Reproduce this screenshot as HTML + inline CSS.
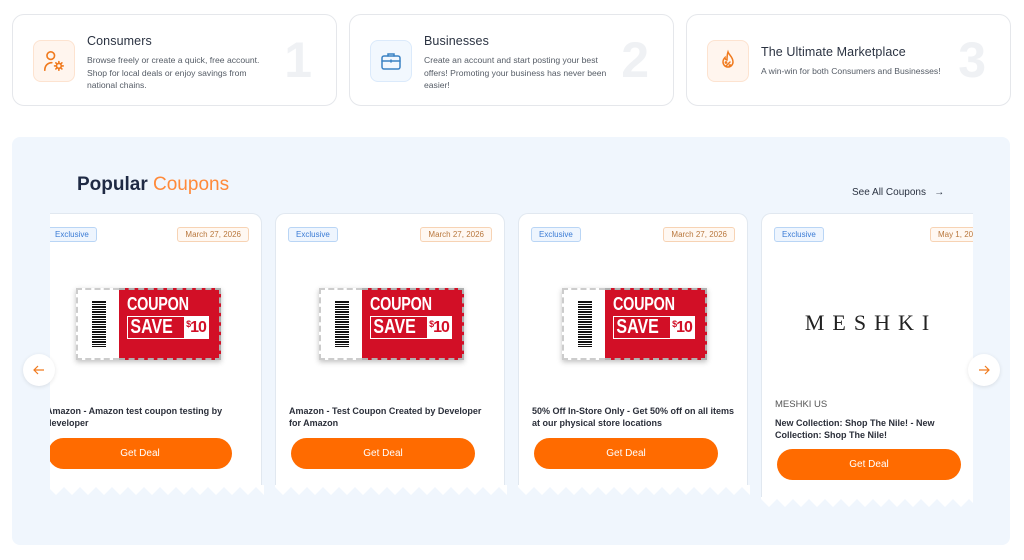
<!DOCTYPE html>
<html><head><meta charset="utf-8"><style>
*{box-sizing:border-box;margin:0;padding:0}
body{width:1024px;height:560px;background:#fff;font-family:"Liberation Sans",sans-serif;position:relative;overflow:hidden;color:#2b2f3a}
.tc{position:absolute;top:14px;width:325px;height:92px;border:1px solid #e5e7eb;border-radius:12px;background:#fff}
.ic{position:absolute;left:20px;top:25px;width:42px;height:42px;border-radius:8px;display:flex;align-items:center;justify-content:center}
.ic.o{background:#fff5ee;border:1px solid #fde3d0}
.ic.b{background:#f2f8fe;border:1px solid #dbeafb}
.tt{position:absolute;left:74px;font-size:12.5px;color:#2b3342;letter-spacing:.1px}
.td{position:absolute;left:74px;font-size:8.6px;line-height:12.5px;color:#555c66;width:190px}
.num{position:absolute;right:24px;top:20px;font-size:50px;font-weight:bold;color:#eff1f4;line-height:1}
.sec{position:absolute;left:12px;top:137px;width:998px;height:408px;background:#f0f6fd;border-radius:8px}
.clip{position:absolute;left:50px;top:213px;width:923px;height:300px;overflow:hidden}
.card{position:absolute;top:0;width:230px;background:#fff;border:1px solid #e1e8f0;border-bottom:none;border-radius:10px 10px 0 0}
.zz{position:absolute;left:-1px;bottom:-10px}
.ex{position:absolute;left:12px;top:13px;font-size:8px;color:#3a7bd5;background:#eef5fe;border:1px solid #b9d5f5;border-radius:3px;padding:2px 7px}
.dt{position:absolute;right:12px;top:13px;font-size:8px;color:#b9783e;background:#fff8f2;border:1px solid #f7d3b4;border-radius:3px;padding:2px 7px}
.ct{position:absolute;left:13px;font-size:9px;font-weight:bold;line-height:12px;color:#2b2f3a;width:205px}
.btn{position:absolute;left:15px;width:184px;height:31px;border-radius:16px;background:#ff6b00;color:#fff;font-size:10px;text-align:center;line-height:31px}
.cp{position:absolute;left:43px;top:74px;width:145px;height:72px;box-shadow:0 2px 5px rgba(0,0,0,.25);display:flex}
.cp .w{width:43px;background:#fff;border:2px dashed #ccc;border-right:none;display:flex;align-items:center;justify-content:center}
.bars{width:14px;height:46px;background:repeating-linear-gradient(180deg,#111 0 2px,#fff 2px 3px,#111 3px 4px,#fff 4px 5px)}
.cp .r{flex:1;background:#d20f26;border:2px dashed #b0b0b0;border-left:none;padding:5px 0 0 8px;color:#fff;font-weight:bold}
.cp .r .a{font-size:18px;line-height:19px;transform:scaleX(.8);transform-origin:left;letter-spacing:-.3px}
.cp .r .s{display:flex;border:1.5px solid #fff;width:82px;height:23px;margin-top:2px;overflow:hidden}
.cp .r .s i{font-style:normal;font-size:20px;line-height:21px;padding-left:3px;transform:scaleX(.8);transform-origin:left;flex:1;white-space:nowrap}
.cp .r .s b{background:#fff;color:#d20f26;font-size:16px;line-height:21px;width:30px;text-align:center;letter-spacing:-1px}
.cp .r .s b sup{font-size:9px;vertical-align:top;line-height:14px}
.arr{position:absolute;top:354px;width:32px;height:32px;border-radius:50%;background:#fff;box-shadow:0 1px 4px rgba(0,0,0,.1);display:flex;align-items:center;justify-content:center}
</style></head><body>

<div class="tc" style="left:12px">
 <div class="ic o"><svg width="26" height="26" viewBox="0 0 24 24" fill="none" stroke="#f07a1e" stroke-width="1.5" stroke-linecap="round"><circle cx="9" cy="7" r="3.5"/><path d="M3.5 20.5c0-4 2.5-7 6.5-7"/><circle cx="16.5" cy="16.5" r="2.2"/><path d="M16.5 12.5v1.5M16.5 19v1.5M12.5 16.5h1.5M19 16.5h1.5M13.7 13.7l1 1M18.3 18.3l1 1M13.7 19.3l1-1M18.3 14.7l1-1"/></svg></div>
 <div class="tt" style="top:19px">Consumers</div>
 <div class="td" style="top:39px">Browse freely or create a quick, free account. Shop for local deals or enjoy savings from national chains.</div>
 <div class="num">1</div>
</div>
<div class="tc" style="left:349px">
 <div class="ic b"><svg width="24" height="24" viewBox="0 0 24 24" fill="none" stroke="#3b82c4" stroke-width="1.5" stroke-linecap="round"><rect x="3" y="7" width="18" height="13" rx="2"/><path d="M9 7V5h6v2M3 12h18M12 11v2"/></svg></div>
 <div class="tt" style="top:19px">Businesses</div>
 <div class="td" style="top:39px">Create an account and start posting your best offers! Promoting your business has never been easier!</div>
 <div class="num">2</div>
</div>
<div class="tc" style="left:686px">
 <div class="ic o"><svg width="24" height="24" viewBox="0 0 24 24" fill="none" stroke="#f07a1e" stroke-width="1.5" stroke-linecap="round"><path d="M12 3c1 3 5 5 5 10a5 5 0 0 1-10 0c0-2 1-3.5 2-4.5 0 1.5 1 2.5 2 2.5 0-3 0-5 1-8z"/><path d="M10 17l4-4"/><circle cx="10" cy="13.5" r=".6"/><circle cx="14" cy="16.5" r=".6"/></svg></div>
 <div class="tt" style="top:30px">The Ultimate Marketplace</div>
 <div class="td" style="top:50px;width:230px">A win-win for both Consumers and Businesses!</div>
 <div class="num">3</div>
</div>

<div class="sec"></div>
<div style="position:absolute;left:77px;top:174px;font-size:19px;font-weight:bold;color:#1f2a44">Popular <span style="color:#ff8a3a;font-weight:normal">Coupons</span></div>
<div style="position:absolute;left:852px;top:187px;font-size:10px;color:#2b3342">See All Coupons &nbsp;&nbsp;→</div>

<div class="clip">
 <div class="card" style="left:-18px;height:272px"><svg class="zz" width="232" height="10"><path d="M0 0H232V10L224 2 216 10 208 2 200 10 192 2 184 10 176 2 168 10 160 2 152 10 144 2 136 10 128 2 120 10 112 2 104 10 96 2 88 10 80 2 72 10 64 2 56 10 48 2 40 10 32 2 24 10 16 2 8 10 0 2Z" fill="#fff"/></svg>
  <div class="ex" style="left:14px">Exclusive</div><div class="dt">March 27, 2026</div>
  <div class="cp"><div class="w"><div class="bars"></div></div><div class="r"><div class="a">COUPON</div><div class="s"><i>SAVE</i><b><sup>$</sup>10</b></div></div></div>
  <div class="ct" style="top:191px">Amazon - Amazon test coupon testing by developer</div>
  <div class="btn" style="top:224px">Get Deal</div>
 </div>
 <div class="card" style="left:225px;height:272px"><svg class="zz" width="232" height="10"><path d="M0 0H232V10L224 2 216 10 208 2 200 10 192 2 184 10 176 2 168 10 160 2 152 10 144 2 136 10 128 2 120 10 112 2 104 10 96 2 88 10 80 2 72 10 64 2 56 10 48 2 40 10 32 2 24 10 16 2 8 10 0 2Z" fill="#fff"/></svg>
  <div class="ex">Exclusive</div><div class="dt">March 27, 2026</div>
  <div class="cp"><div class="w"><div class="bars"></div></div><div class="r"><div class="a">COUPON</div><div class="s"><i>SAVE</i><b><sup>$</sup>10</b></div></div></div>
  <div class="ct" style="top:191px">Amazon - Test Coupon Created by Developer for Amazon</div>
  <div class="btn" style="top:224px">Get Deal</div>
 </div>
 <div class="card" style="left:468px;height:272px"><svg class="zz" width="232" height="10"><path d="M0 0H232V10L224 2 216 10 208 2 200 10 192 2 184 10 176 2 168 10 160 2 152 10 144 2 136 10 128 2 120 10 112 2 104 10 96 2 88 10 80 2 72 10 64 2 56 10 48 2 40 10 32 2 24 10 16 2 8 10 0 2Z" fill="#fff"/></svg>
  <div class="ex">Exclusive</div><div class="dt">March 27, 2026</div>
  <div class="cp"><div class="w"><div class="bars"></div></div><div class="r"><div class="a">COUPON</div><div class="s"><i>SAVE</i><b><sup>$</sup>10</b></div></div></div>
  <div class="ct" style="top:191px">50% Off In-Store Only - Get 50% off on all items at our physical store locations</div>
  <div class="btn" style="top:224px">Get Deal</div>
 </div>
 <div class="card" style="left:711px;height:284px"><svg class="zz" width="232" height="10"><path d="M0 0H232V10L224 2 216 10 208 2 200 10 192 2 184 10 176 2 168 10 160 2 152 10 144 2 136 10 128 2 120 10 112 2 104 10 96 2 88 10 80 2 72 10 64 2 56 10 48 2 40 10 32 2 24 10 16 2 8 10 0 2Z" fill="#fff"/></svg>
  <div class="ex">Exclusive</div><div class="dt" style="right:0">May 1, 2026</div>
  <div style="position:absolute;left:0;width:218px;top:96px;text-align:center;font-family:'Liberation Serif',serif;font-size:22px;letter-spacing:8px;color:#222">MESHKI</div>
  <div style="position:absolute;left:13px;top:185px;font-size:9.5px;color:#555">MESHKI US</div>
  <div class="ct" style="top:203px">New Collection: Shop The Nile! - New Collection: Shop The Nile!</div>
  <div class="btn" style="top:235px">Get Deal</div>
 </div>
</div>

<div class="arr" style="left:23px"><svg width="14" height="14" viewBox="0 0 14 14" fill="none" stroke="#f07a1e" stroke-width="1.2"><path d="M12 7H2M6 3L2 7l4 4"/></svg></div>
<div class="arr" style="left:968px"><svg width="14" height="14" viewBox="0 0 14 14" fill="none" stroke="#f07a1e" stroke-width="1.2"><path d="M2 7h10M8 3l4 4-4 4"/></svg></div>
</body></html>
